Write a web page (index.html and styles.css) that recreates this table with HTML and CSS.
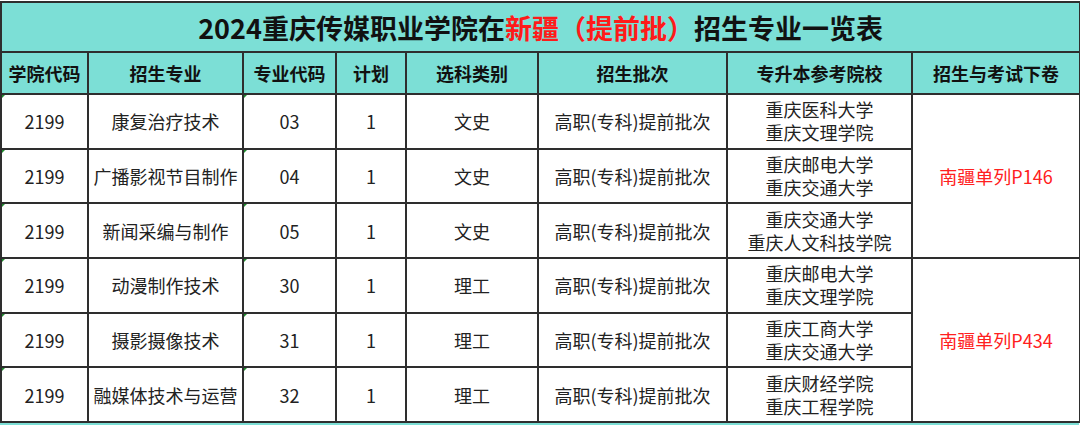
FILE: index.html
```html
<!DOCTYPE html>
<html lang="zh">
<head>
<meta charset="utf-8">
<link rel="stylesheet" href="styles.css">
</head>
<body>
<table class="sheet">
  <colgroup>
    <col class="c1"><col class="c2"><col class="c3"><col class="c4"><col class="c5"><col class="c6"><col class="c7"><col class="c8">
  </colgroup>
  <tr class="title-row">
    <td colspan="8" class="title">2024重庆传媒职业学院在<span class="red">新疆（提前批）</span>招生专业一览表</td>
  </tr>
  <tr class="head-row">
    <th>学院代码</th><th>招生专业</th><th>专业代码</th><th>计划</th><th>选科类别</th><th>招生批次</th><th>专升本参考院校</th><th>招生与考试下卷</th>
  </tr>
  <tr class="row">
    <td class="mark">2199</td><td>康复治疗技术</td><td class="mark">03</td><td>1</td><td>文史</td><td>高职(专科)提前批次</td><td class="two">重庆医科大学<br>重庆文理学院</td>
    <td rowspan="3" class="note">南疆单列P146</td>
  </tr>
  <tr class="row">
    <td class="mark">2199</td><td>广播影视节目制作</td><td class="mark">04</td><td>1</td><td>文史</td><td>高职(专科)提前批次</td><td class="two">重庆邮电大学<br>重庆交通大学</td>
  </tr>
  <tr class="row">
    <td class="mark">2199</td><td>新闻采编与制作</td><td class="mark">05</td><td>1</td><td>文史</td><td>高职(专科)提前批次</td><td class="two">重庆交通大学<br>重庆人文科技学院</td>
  </tr>
  <tr class="row">
    <td class="mark">2199</td><td>动漫制作技术</td><td class="mark">30</td><td>1</td><td>理工</td><td>高职(专科)提前批次</td><td class="two">重庆邮电大学<br>重庆文理学院</td>
    <td rowspan="3" class="note">南疆单列P434</td>
  </tr>
  <tr class="row">
    <td class="mark">2199</td><td>摄影摄像技术</td><td class="mark">31</td><td>1</td><td>理工</td><td>高职(专科)提前批次</td><td class="two">重庆工商大学<br>重庆交通大学</td>
  </tr>
  <tr class="row">
    <td class="mark">2199</td><td>融媒体技术与运营</td><td class="mark">32</td><td>1</td><td>理工</td><td>高职(专科)提前批次</td><td class="two">重庆财经学院<br>重庆工程学院</td>
  </tr>
</table>
<div class="next-strip"></div>
</body>
</html>
```
FILE: styles.css
```css
html, body {
  margin: 0;
  padding: 0;
  background: #ffffff;
}
body {
  padding: 1px 0 0 0;
  font-family: "Noto Sans CJK SC", "Noto Sans", sans-serif;
  color: #1a1a1a;
}
.sheet {
  border-collapse: collapse;
  table-layout: fixed;
  width: 1079px;
}
.c1 { width: 87px; }
.c2 { width: 155px; }
.c3 { width: 93px; }
.c4 { width: 70px; }
.c5 { width: 132px; }
.c6 { width: 189px; }
.c7 { width: 185px; }
.c8 { width: 168px; }

.sheet td, .sheet th {
  border: 2px solid #2e2e2e;
  padding: 0;
  text-align: center;
  vertical-align: middle;
  white-space: nowrap;
  overflow: hidden;
}
.title-row td {
  height: 48px;
  background: #7cdfd6;
  font-size: 27px;
  font-weight: 700;
  color: #111;
  letter-spacing: 0;
}
.red { color: #ff1a1a; }
.head-row th {
  height: 40px;
  background: #7cdfd6;
  font-size: 18px;
  font-weight: 700;
  color: #111;
}
.row td {
  height: 52.7px;
  font-size: 18px;
  line-height: 22px;
  color: #222;
  background: #fff;
}
.row td.two {
  line-height: 23px;
}
.row td.note {
  color: #ff2020;
  font-size: 18px;
}
.mark {
  position: relative;
}
.mark::before {
  content: "";
  position: absolute;
  left: 0;
  top: 0;
  border-top: 3px solid #1f8a2e;
  border-right: 3px solid transparent;
}
.next-strip {
  width: 1079px;
  height: 8px;
  background: #7cdfd6;
}
```
